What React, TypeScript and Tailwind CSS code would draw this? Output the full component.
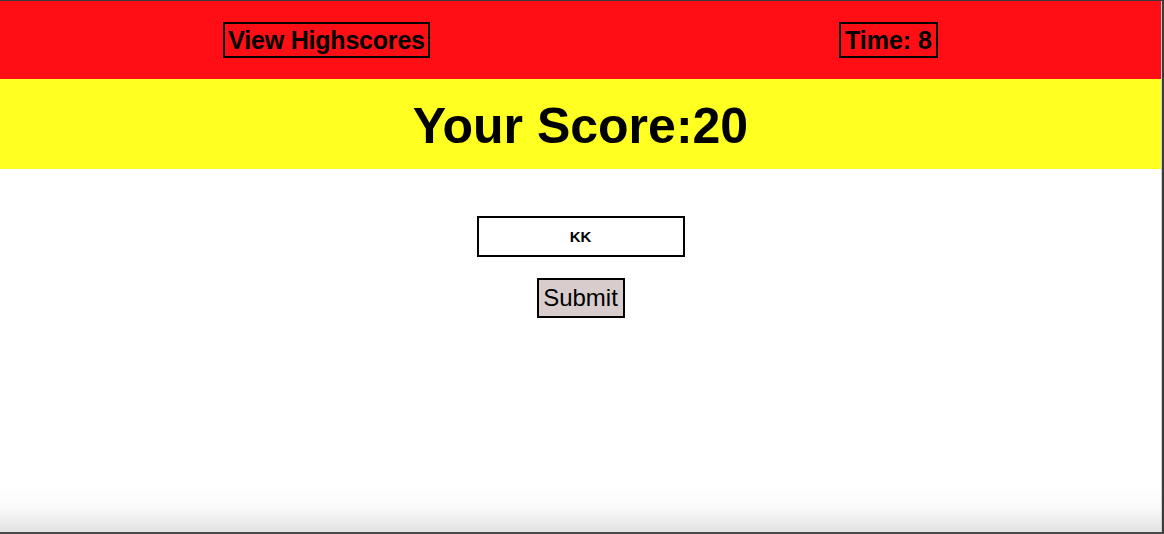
import React from 'react';

const App = () => {
  return (
    <div className="h-[534px] w-[1164px] flex flex-col border-t border-t-[#3a3a3a] border-r-2 border-r-[#3c3c3c] border-b-2 border-b-[#4a4a4a] overflow-hidden font-['Liberation_Sans',Arial,sans-serif] text-black">
      <div className="flex-1 flex flex-col border-r border-r-[#d0d0d0] bg-[linear-gradient(to_bottom,#ffffff_calc(100%-48px),#fafafa_calc(100%-24px),#e2e2e2)]">
        <header className="h-[78px] bg-[#ff0f15] flex items-center justify-between px-[223px]">
          <a href="#" className="h-9 w-[207px] border-2 border-black flex items-center justify-center text-[25px] font-bold leading-none tracking-[-0.2px]">
            View Highscores
          </a>
          <div className="h-9 w-[99px] border-2 border-black flex items-center justify-center text-[25px] font-bold leading-none">
            Time: 8
          </div>
        </header>
        <div className="h-[90px] bg-[#ffff22] flex items-center justify-center">
          <h1 className="text-[50px] font-bold leading-none pt-1">Your Score:20</h1>
        </div>
        <form className="flex flex-col items-center pt-[47px] gap-[21px]">
          <input
            type="text"
            defaultValue="KK"
            className="h-[41px] w-[208px] border-2 border-black bg-white text-center text-[15px] font-bold outline-none"
          />
          <button
            type="button"
            className="h-10 w-[88px] border-2 border-black bg-[#d8cccd] text-2xl leading-none"
          >
            Submit
          </button>
        </form>
      </div>
    </div>
  );
};

export default App;
